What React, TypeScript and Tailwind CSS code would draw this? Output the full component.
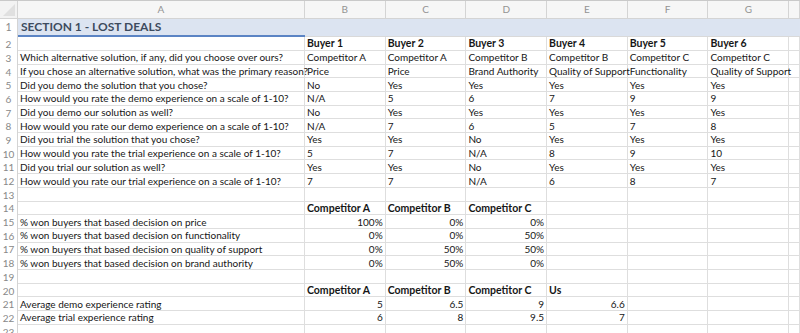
import React from "react";

const COLS = ["A", "B", "C", "D", "E", "F", "G", ""];

type Cell = { v: string; bold?: boolean; right?: boolean };

const buyers = ["Buyer 1", "Buyer 2", "Buyer 3", "Buyer 4", "Buyer 5", "Buyer 6"];

const survey: [string, string[]][] = [
  ["Which alternative solution, if any, did you choose over ours?", ["Competitor A", "Competitor A", "Competitor B", "Competitor B", "Competitor C", "Competitor C"]],
  ["If you chose an alternative solution, what was the primary reason?", ["Price", "Price", "Brand Authority", "Quality of Support", "Functionality", "Quality of Support"]],
  ["Did you demo the solution that you chose?", ["No", "Yes", "Yes", "Yes", "Yes", "Yes"]],
  ["How would you rate the demo experience on a scale of 1-10?", ["N/A", "5", "6", "7", "9", "9"]],
  ["Did you demo our solution as well?", ["No", "Yes", "Yes", "Yes", "Yes", "Yes"]],
  ["How would you rate our demo experience on a scale of 1-10?", ["N/A", "7", "6", "5", "7", "8"]],
  ["Did you trial the solution that you chose?", ["Yes", "Yes", "No", "Yes", "Yes", "Yes"]],
  ["How would you rate the trial experience on a scale of 1-10?", ["5", "7", "N/A", "8", "9", "10"]],
  ["Did you trial our solution as well?", ["Yes", "Yes", "No", "Yes", "Yes", "Yes"]],
  ["How would you rate our trial experience on a scale of 1-10?", ["7", "7", "N/A", "6", "8", "7"]],
];

const won: [string, string[]][] = [
  ["% won buyers that based decision on price", ["100%", "0%", "0%"]],
  ["% won buyers that based decision on functionality", ["0%", "0%", "50%"]],
  ["% won buyers that based decision on quality of support", ["0%", "50%", "50%"]],
  ["% won buyers that based decision on brand authority", ["0%", "50%", "0%"]],
];

const ratings: [string, string[]][] = [
  ["Average demo experience rating", ["5", "6.5", "9", "6.6"]],
  ["Average trial experience rating", ["6", "8", "9.5", "7"]],
];

const bold = (v: string): Cell => ({ v, bold: true });
const num = (v: string): Cell => ({ v, right: true });

// rows 2..23, cells A..H
const rows: Cell[][] = [
  [{ v: "" }, ...buyers.map(bold)],
  ...survey.map(([q, a]) => [{ v: q }, ...a.map((v) => ({ v }))]),
  [],
  [{ v: "" }, bold("Competitor A"), bold("Competitor B"), bold("Competitor C")],
  ...won.map(([q, a]) => [{ v: q }, ...a.map(num)]),
  [],
  [{ v: "" }, bold("Competitor A"), bold("Competitor B"), bold("Competitor C"), bold("Us")],
  ...ratings.map(([q, a]) => [{ v: q }, ...a.map(num)]),
  [],
];

export default function App() {
  return (
    <div
      className="w-[800px] h-[333px] overflow-hidden bg-white text-[10px] text-[#161616]"
      style={{ fontFamily: "Lato, 'Open Sans', sans-serif" }}
    >
      <div className="grid grid-cols-[18px_287px_repeat(6,80.7px)_1fr] border-t border-[#c9c9c9]">
        {/* column headers */}
        <div className="h-[18px] bg-[#f3f3f3] border-b border-r border-[#d4d4d4] relative overflow-hidden">
          <div className="absolute right-[2px] bottom-[2px] w-0 h-0 border-l-[12px] border-l-transparent border-b-[12px] border-b-[#e0e0e0]" />
        </div>
        {COLS.map((c, i) => (
          <div
            key={i}
            className="h-[18px] bg-[#f6f6f6] border-b border-r border-[#d4d4d4] flex items-center justify-center text-[#939393] text-[10px]"
          >
            {c}
          </div>
        ))}

        {/* row 1 */}
        <div className="h-[18.3px] flex items-center justify-center text-[#888] text-[10.5px] border-r border-[#d4d4d4]">1</div>
        <div className="h-[18.3px] bg-[#dce4f1] border-b-2 border-[#5b84c4] flex items-center pl-[3px] text-[12px] font-bold text-[#3d4b5e]">
          SECTION 1 - LOST DEALS
        </div>
        <div className="col-span-7 h-[18.3px] bg-[#dce4f1] border-b border-[#d9d9d9]" />

        {rows.map((r, ri) => (
          <React.Fragment key={ri}>
            <div className="h-[13.7px] flex items-center justify-center text-[#888] text-[10px] leading-none border-r border-[#d4d4d4]">
              {ri + 2}
            </div>
            {COLS.map((_, ci) => {
              const cell = r[ci];
              return (
                <div
                  key={ci}
                  className={`h-[13.7px] border-b border-r border-[#dedede] flex items-center px-[2px] leading-none whitespace-nowrap ${
                    cell?.right ? "justify-end" : ""
                  } ${cell?.bold ? "font-bold text-[10.5px]" : ""}`}
                >
                  {cell?.v}
                </div>
              );
            })}
          </React.Fragment>
        ))}
      </div>
    </div>
  );
}
